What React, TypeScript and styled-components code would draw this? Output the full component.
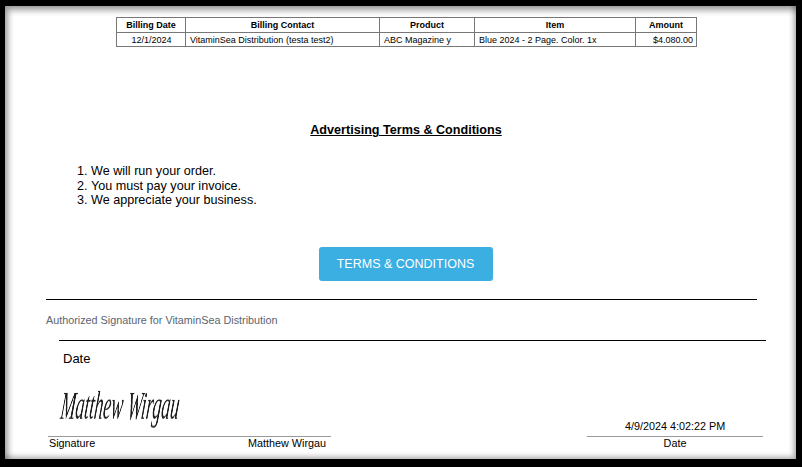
import React from 'react';
import styled, { createGlobalStyle } from 'styled-components';

const GlobalStyle = createGlobalStyle`
  html, body {
    margin: 0;
    padding: 0;
    background: #000;
  }
  body {
    font-family: "Liberation Sans", Arial, sans-serif;
    color: #000;
  }
`;

const Frame = styled.div`
  width: 802px;
  height: 467px;
  box-sizing: border-box;
  padding: 6px 6px 8px 5px;
  background: #000;
  overflow: hidden;
`;

const Sheet = styled.div`
  position: relative;
  height: 453px;
  box-sizing: border-box;
  padding-top: 11px;
  background: #fff;
  overflow: hidden;

  &::before {
    content: '';
    position: absolute;
    inset: 0;
    box-shadow: inset 3px 4px 6px rgba(0, 0, 0, 0.4), inset -3px -3px 5px rgba(0, 0, 0, 0.25);
    pointer-events: none;
  }
`;

const BillingTable = styled.table`
  border-collapse: collapse;
  table-layout: fixed;
  width: 580px;
  margin-left: 111px;
  font-size: 9px;
`;

const HeadCell = styled.th<{ $width: number }>`
  box-sizing: border-box;
  width: ${(p) => p.$width}px;
  height: 15px;
  padding: 0;
  border: 1px solid #777;
  font-weight: bold;
  text-align: center;
  line-height: 13px;
`;

const Cell = styled.td<{ $align?: string }>`
  box-sizing: border-box;
  height: 14px;
  padding: 0 3px 0 4px;
  border: 1px solid #777;
  line-height: 12px;
  text-align: ${(p) => p.$align || 'left'};
  white-space: nowrap;
`;

const Heading = styled.h2`
  margin: 76px 0 0;
  padding-left: 11px;
  font-size: 12.6px;
  line-height: 15px;
  font-weight: bold;
  text-decoration: underline;
  text-align: center;
`;

const Terms = styled.ol`
  margin: 26px 0 0;
  padding-left: 86px;
  font-size: 12.6px;
  line-height: 14.6px;
`;

const ButtonRow = styled.div`
  display: flex;
  justify-content: center;
  margin-top: 39px;
  padding-left: 10px;
`;

const TermsButton = styled.button`
  width: 174px;
  height: 34px;
  padding: 0;
  border: none;
  border-radius: 3px;
  background: #3baee2;
  color: #fff;
  font-family: inherit;
  font-size: 12.5px;
`;

const Rule = styled.div<{ $left: number; $width: number }>`
  width: ${(p) => p.$width}px;
  margin-left: ${(p) => p.$left}px;
  border-top: 1px solid #000;
`;

const SectionRule = styled(Rule)`
  margin-top: 18px;
`;

const AuthorizedText = styled.div`
  margin: 14px 0 13px 41px;
  font-size: 10.8px;
  line-height: 13px;
  color: #5c6470;
`;

const DateLabel = styled.div`
  margin: 10px 0 0 58px;
  font-size: 13px;
  line-height: 15px;
`;

const SignatureRow = styled.div`
  display: flex;
  align-items: flex-end;
  margin-top: 21px;
  padding-left: 43px;
`;

const SignBlock = styled.div<{ $width: number; $offset?: number }>`
  width: ${(p) => p.$width}px;
  margin-left: ${(p) => p.$offset || 0}px;
`;

const SignatureScript = styled.div`
  height: 49px;
  padding-left: 28px;
  font-family: "Liberation Serif", "Times New Roman", serif;
  font-style: italic;
  font-size: 40px;
  line-height: 37px;
  color: #1c1c1c;
  white-space: nowrap;
  transform: skewX(-6deg) scaleX(0.445);
  transform-origin: left center;
  will-change: transform;
`;

const StampedValue = styled.div`
  font-size: 10.8px;
  line-height: 14px;
  text-align: center;
  padding-bottom: 3px;
`;

const SignLabels = styled.div<{ $spread?: boolean }>`
  display: flex;
  justify-content: ${(p) => (p.$spread ? 'space-between' : 'center')};
  padding: 0 ${(p) => (p.$spread ? '5px' : '0')} 0 ${(p) => (p.$spread ? '1px' : '0')};
  border-top: 1px solid #999;
  font-size: 10.8px;
  line-height: 13px;
`;

const columns = [
  { label: 'Billing Date', width: 69 },
  { label: 'Billing Contact', width: 194 },
  { label: 'Product', width: 95 },
  { label: 'Item', width: 161 },
  { label: 'Amount', width: 61 },
];

const terms = ['We will run your order.', 'You must pay your invoice.', 'We appreciate your business.'];

export default function App() {
  return (
    <>
      <GlobalStyle />
      <Frame>
        <Sheet>
          <BillingTable>
            <thead>
              <tr>
                {columns.map((c) => (
                  <HeadCell key={c.label} $width={c.width}>
                    {c.label}
                  </HeadCell>
                ))}
              </tr>
            </thead>
            <tbody>
              <tr>
                <Cell $align="center">12/1/2024</Cell>
                <Cell>VitaminSea Distribution (testa test2)</Cell>
                <Cell>ABC Magazine y</Cell>
                <Cell>Blue 2024 - 2 Page. Color. 1x</Cell>
                <Cell $align="right">$4.080.00</Cell>
              </tr>
            </tbody>
          </BillingTable>

          <Heading>Advertising Terms &amp; Conditions</Heading>

          <Terms>
            {terms.map((t) => (
              <li key={t}>{t}</li>
            ))}
          </Terms>

          <ButtonRow>
            <TermsButton>TERMS &amp; CONDITIONS</TermsButton>
          </ButtonRow>

          <SectionRule $left={41} $width={711} />
          <AuthorizedText>Authorized Signature for VitaminSea Distribution</AuthorizedText>
          <Rule $left={54} $width={707} />
          <DateLabel>Date</DateLabel>

          <SignatureRow>
            <SignBlock $width={283}>
              <SignatureScript>Matthew Wirgau</SignatureScript>
              <SignLabels $spread>
                <span>Signature</span>
                <span>Matthew Wirgau</span>
              </SignLabels>
            </SignBlock>
            <SignBlock $width={176} $offset={256}>
              <StampedValue>4/9/2024 4:02:22 PM</StampedValue>
              <SignLabels>
                <span>Date</span>
              </SignLabels>
            </SignBlock>
          </SignatureRow>
        </Sheet>
      </Frame>
    </>
  );
}
